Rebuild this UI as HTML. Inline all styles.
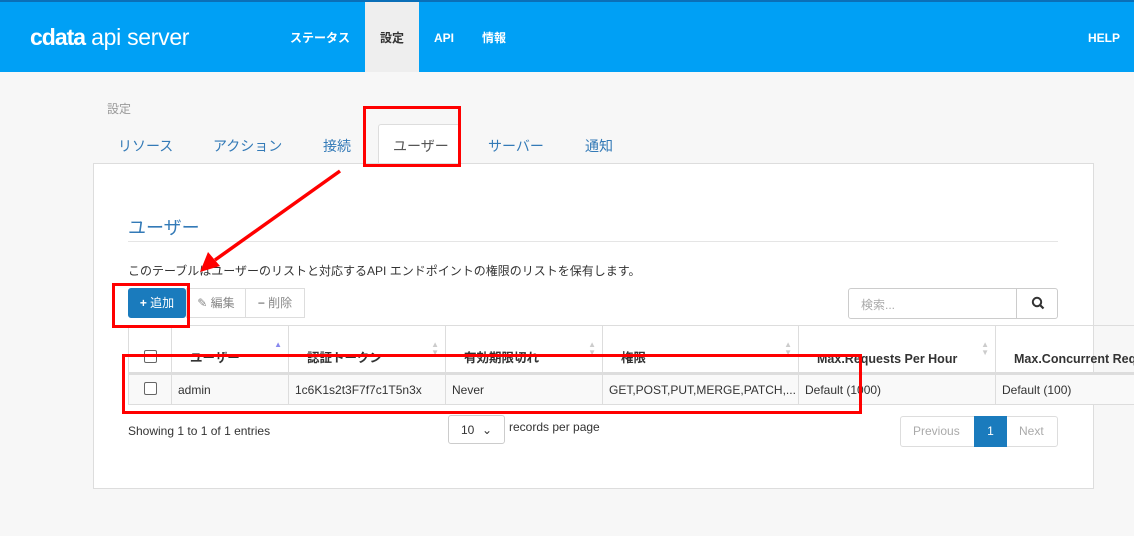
<!DOCTYPE html>
<html><head><meta charset="utf-8"><style>
*{box-sizing:border-box}
body{margin:0;width:1134px;height:536px;overflow:hidden;background:#f7f7f7;font-family:"Liberation Sans","Noto Sans CJK JP",sans-serif;font-size:13px;color:#333;position:relative}
.hdr{position:absolute;left:0;top:0;width:1134px;height:72px;background:#00a0f5;border-top:2px solid #0a6fb8}
.logo{position:absolute;left:30px;top:22px;color:#fff;font-size:23px;letter-spacing:-0.3px}
.nav{position:absolute;top:0;height:70px;line-height:72px;color:#fff;font-size:12px;font-weight:bold}
.ab{position:absolute}
.tab{position:absolute;top:136px;color:#337ab7;font-size:14px}
.panel{position:absolute;left:93px;top:163px;width:1001px;height:326px;background:#fff;border:1px solid #ddd}
.btn{position:absolute;top:288px;height:30px;line-height:28px;border:1px solid #ddd;background:#fff;color:#888;font-size:12px;text-align:center}
table{position:absolute;left:128px;top:325px;border-collapse:collapse;table-layout:fixed;width:1040px;font-size:12px}
td,th{border:1px solid #ddd;padding:0 6px;white-space:nowrap;overflow:hidden;text-align:left}
th{height:48px;vertical-align:bottom;padding-bottom:6px;border-bottom:3px solid #ddd;font-size:12.5px;color:#333;position:relative}
td{height:31px;background:#f9f9f9}
.cb{display:inline-block;width:13px;height:13px;border:1px solid #666;border-radius:2px;background:#fff}
.s{position:absolute;right:6px;top:15px;font-size:8px;line-height:8px;color:#ccc}
.red{position:absolute;border:3px solid #f00}
</style></head><body>
<div class="hdr">
<div class="logo"><b style="letter-spacing:-1px">cdata</b> api server</div>
<div class="nav" style="left:290px">ステータス</div>
<div class="nav" style="left:365px;width:54px;background:#eee;color:#333;text-align:center">設定</div>
<div class="nav" style="left:434px">API</div>
<div class="nav" style="left:482px">情報</div>
<div class="nav" style="left:1088px">HELP</div>
</div>
<div class="ab" style="left:107px;top:100px;color:#999;font-size:12px">設定</div>
<div class="tab" style="left:118px">リソース</div>
<div class="tab" style="left:213px">アクション</div>
<div class="tab" style="left:323px">接続</div>
<div class="ab" style="left:378px;top:124px;width:82px;height:40px;background:#fff;border:1px solid #ddd;border-bottom:none;border-radius:3px 3px 0 0"></div>
<div class="tab" style="left:393px;color:#555">ユーザー</div>
<div class="tab" style="left:488px">サーバー</div>
<div class="tab" style="left:585px">通知</div>
<div class="panel"></div>
<div class="ab" style="left:128px;top:214px;color:#337ab7;font-size:18px">ユーザー</div>
<div class="ab" style="left:128px;top:241px;width:930px;border-top:1px solid #e5e5e5"></div>
<div class="ab" style="left:128px;top:262px;font-size:12px">このテーブルはユーザーのリストと対応するAPI エンドポイントの権限のリストを保有します。</div>
<div class="btn" style="left:128px;width:58px;background:#1a7bbd;color:#fff;border-color:#1a7bbd;border-radius:3px"><b>+</b> 追加</div>
<div class="btn" style="left:186px;width:60px">✎ 編集</div>
<div class="btn" style="left:245px;width:60px"><b>−</b> 削除</div>
<div class="ab" style="left:848px;top:288px;width:210px;height:31px;border:1px solid #ccc;border-radius:3px;background:#fff"></div>
<div class="ab" style="left:861px;top:296px;color:#aaa;font-size:12px">検索...</div>
<div class="ab" style="left:1016px;top:288px;width:1px;height:31px;background:#ccc"></div>
<svg class="ab" style="left:1031px;top:296px" width="14" height="14"><circle cx="6" cy="6" r="4.2" fill="none" stroke="#333" stroke-width="2"/><path d="M9 9l3.5 3.5" stroke="#333" stroke-width="2.2"/></svg>
<table>
<colgroup><col style="width:43px"><col style="width:117px"><col style="width:157px"><col style="width:157px"><col style="width:196px"><col style="width:197px"><col></colgroup>
<tr><th style="text-align:center"><span class="cb"></span></th><th style="padding-left:18px">ユーザー<span class="s" style="color:#88e">▲</span></th><th style="padding-left:18px">認証トークン<span class="s">▲<br>▼</span></th><th style="padding-left:18px">有効期限切れ<span class="s">▲<br>▼</span></th><th style="padding-left:18px">権限<span class="s">▲<br>▼</span></th><th style="padding-left:18px">Max.Requests Per Hour<span class="s">▲<br>▼</span></th><th style="padding-left:18px">Max.Concurrent Requests</th></tr>
<tr><td style="text-align:center"><span class="cb"></span></td><td>admin</td><td>1c6K1s2t3F7f7c1T5n3x</td><td>Never</td><td>GET,POST,PUT,MERGE,PATCH,...</td><td>Default (1000)</td><td>Default (100)</td></tr>
</table>
<div class="ab" style="left:128px;top:424px;font-size:12px">Showing 1 to 1 of 1 entries</div>
<div class="ab" style="left:448px;top:415px;width:57px;height:29px;border:1px solid #ccc;border-radius:3px;background:#fff;font-size:12px;padding:7px 12px">10 <span style="float:right">⌄</span></div>
<div class="ab" style="left:509px;top:420px;font-size:12px">records per page</div>
<div class="ab" style="left:900px;top:416px;width:158px;height:31px;border:1px solid #ddd;border-radius:3px;background:#fff;font-size:12px;color:#aaa;line-height:29px">
<span style="position:absolute;left:12px">Previous</span>
<span style="position:absolute;left:73px;top:-1px;width:33px;height:31px;line-height:31px;background:#1a7bbd;color:#fff;text-align:center">1</span>
<span style="position:absolute;left:118px">Next</span></div>
<div class="red" style="left:363px;top:106px;width:98px;height:61px"></div>
<div class="red" style="left:112px;top:283px;width:78px;height:45px"></div>
<div class="red" style="left:122px;top:354px;width:740px;height:60px"></div>
<svg class="ab" style="left:0;top:0" width="1134" height="536"><path d="M340 171L215 260" stroke="#f00" stroke-width="3.5"/><path d="M200 272l8-20 12 14z" fill="#f00"/></svg>
</body></html>
